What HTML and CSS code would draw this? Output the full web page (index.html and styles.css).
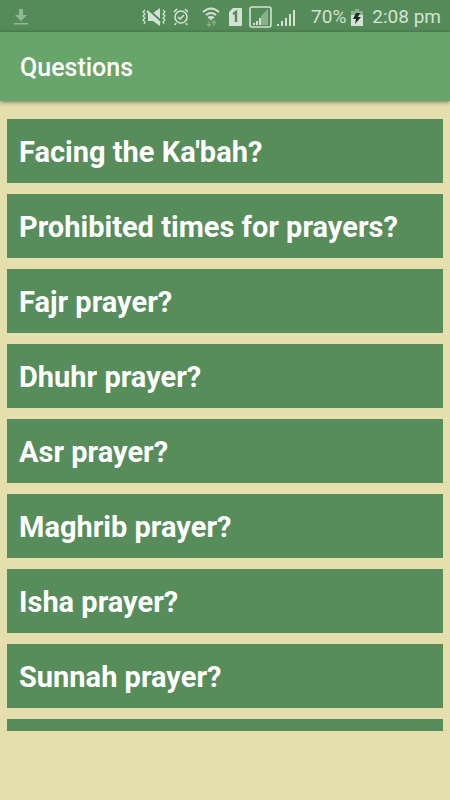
FILE: index.html
```
<!DOCTYPE html>
<html lang="en">
<head>
    <meta charset="UTF-8">
    <meta name="viewport" content="width=device-width, initial-scale=1.0">
    <title>Questions</title>
    <link rel="stylesheet" href="styles.css">
</head>
<body>
    <div class="status-bar">
        <svg class="download" width="14" height="16" viewBox="0 0 14 16">
            <path d="M5 0h4v6h4l-6 6-6-6h4z"/>
            <path d="M0 14h14v1.5H0z"/>
        </svg>

        <div class="status-icons">
            <!-- Vibrate / muted -->
            <svg width="24" height="18" viewBox="0 0 24 18">
                <path d="M6 5h5l7-5v18l-7-5H6z"/>
                <path class="cut" d="M7 2l13 12"/>
                <path class="line bold" d="M5 3l13 12"/>
                <path class="line thin" d="M3 2L1 4l2 2-2 2 2 2-2 2 2 2-1 2M21 2l2 2-2 2 2 2-2 2 2 2-2 2 1 2"/>
            </svg>
            <!-- Alarm -->
            <svg class="alarm" width="16" height="18" viewBox="0 0 16 18">
                <circle class="line" cx="8" cy="9" r="6"/>
                <path class="line" d="M1 4l3-3M15 4l-3-3M3 15l-1 2M13 15l1 2"/>
                <path class="line" d="M5 9l2 2 4-4"/>
            </svg>
            <!-- Wifi -->
            <svg class="wifi" width="18" height="20" viewBox="0 0 18 20">
                <path class="line bold" d="M1 5q8-7 16 0M4 8q5-4 10 0M6 11q3-2 6 0"/>
                <circle cx="9" cy="12" r="1.2"/>
                <path class="line faint" d="M7 14v5M5 17l2 2 2-2M12 19v-5M10 16l2-2 2 2"/>
            </svg>
            <!-- SIM 1 -->
            <svg class="sim" width="13" height="18" viewBox="0 0 13 18">
                <path d="M4 0h8q1 0 1 1v16q0 1-1 1H1q-1 0-1-1V4z"/>
                <path class="digit" d="M4 6l3-2v10"/>
            </svg>
            <!-- Signal with frame -->
            <svg class="signal-box" width="23" height="22" viewBox="0 0 23 22">
                <rect class="line" x="1" y="1" width="21" height="20" rx="2"/>
                <path class="faint-fill" d="M19 3v16h-7v-9z"/>
                <path d="M4 17h2v2H4zM7 15h2v4H7zM10 12h2v7h-2z"/>
            </svg>
            <!-- Signal -->
            <svg class="signal" width="18" height="17" viewBox="0 0 18 17">
                <path d="M0 15h2v2H0zM4 12h2v5H4zM8 9h2v8H8zM12 5h2v12h-2zM16 1h2v16h-2z"/>
            </svg>
            <span class="percent">70%</span>
            <!-- Battery -->
            <svg class="battery" width="12" height="17" viewBox="0 0 12 17">
                <path class="faint-fill" d="M4 0h4v2h4v5H0V2h4z"/>
                <path d="M0 6h12v11H0z"/>
                <path class="bolt" d="M5 4h4L7 8h3l-6 7 1-5H2z"/>
            </svg>
            <span class="time">2:08 pm</span>
        </div>
    </div>

    <header class="app-bar">
        <h1>Questions</h1>
    </header>

    <main class="question-list">
        <button class="question">Facing the Ka'bah?</button>
        <button class="question">Prohibited times for prayers?</button>
        <button class="question">Fajr prayer?</button>
        <button class="question">Dhuhr prayer?</button>
        <button class="question">Asr prayer?</button>
        <button class="question">Maghrib prayer?</button>
        <button class="question">Isha prayer?</button>
        <button class="question">Sunnah prayer?</button>
        <button class="question"></button>
    </main>

    <footer class="bottom-space"></footer>
</body>
</html>
```
FILE: styles.css
```
:root {
    --status-color: #558b59;
    --bar-color: #68a56b;
    --item-color: #578c5b;
    --background-color: #e5dfad;
    --icon-color: #d3e2d3;
}

* {
    box-sizing: border-box;
}

body {
    font-family: Roboto, sans-serif;
    background-color: var(--background-color);
    color: white;
    margin: 0;
    height: 100vh;
    display: flex;
    flex-direction: column;
    overflow: hidden;
}

.status-bar {
    flex: none;
    display: flex;
    justify-content: space-between;
    align-items: center;
    height: 32px;
    padding: 2px 9px 0 14px;
    background-color: var(--status-color);
    color: var(--icon-color);
    font-size: 19px;
    line-height: 24px;
}

.status-bar svg {
    flex: none;
    fill: var(--icon-color);
}

.status-bar .download {
    fill: #91b894;
}

.status-icons {
    display: flex;
    align-items: center;
}

.alarm {
    margin-left: 7px;
}

.wifi {
    margin-left: 13px;
}

.sim {
    margin-left: 9px;
}

.signal-box {
    margin-left: 7px;
}

.signal {
    margin-left: 5px;
}

.percent {
    margin-left: 16px;
}

.battery {
    margin-left: 5px;
}

.time {
    margin-left: 9px;
}

.status-bar .line {
    fill: none;
    stroke: var(--icon-color);
    stroke-width: 1.6;
}

.status-bar .thin {
    stroke-width: 1.2;
}

.status-bar .bold {
    stroke-width: 2;
}

.status-bar .faint {
    stroke: #8bb08d;
    stroke-width: 1.2;
}

.status-bar .faint-fill {
    fill: #8bb08d;
}

.cut {
    stroke: var(--status-color);
    stroke-width: 2;
}

.digit {
    fill: none;
    stroke: var(--status-color);
    stroke-width: 2.4;
}

.status-bar .bolt {
    fill: #1d2b1e;
}

.app-bar {
    flex: none;
    display: flex;
    align-items: center;
    height: 69px;
    padding: 2px 20px 0;
    background-color: var(--bar-color);
    box-shadow: 0 1px 4px rgba(0, 0, 0, 0.5);
}

.app-bar h1 {
    margin: 0;
    font-size: 25px;
    font-weight: 500;
    line-height: 32px;
}

.question-list {
    flex: 1;
    min-height: 0;
    display: flex;
    flex-direction: column;
    gap: 11px;
    margin-top: 18px;
    padding: 0 7px;
    overflow-y: auto;
    scrollbar-width: none;
}

.question {
    flex: none;
    min-height: 64px;
    padding: 13px 12px 11px;
    background-color: var(--item-color);
    color: white;
    border: none;
    font-family: inherit;
    font-size: 29px;
    font-weight: bold;
    line-height: 40px;
    text-align: left;
    cursor: pointer;
}

.bottom-space {
    flex: none;
    height: 69px;
}
```
